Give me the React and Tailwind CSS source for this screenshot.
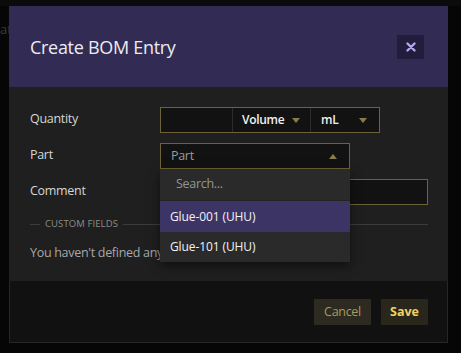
import React from 'react';

function Caret({ up = false, className = '' }) {
  return (
    <svg width="8" height="5" viewBox="0 0 8 5" className={className}>
      {up ? <path d="M0 5 L4 0 L8 5 Z" fill="currentColor" /> : <path d="M0 0 L8 0 L4 5 Z" fill="currentColor" />}
    </svg>
  );
}

export default function App() {
  const font = { fontFamily: '"Open Sans", "Noto Sans", sans-serif' };

  return (
    <div className="relative w-[461px] h-[353px] overflow-hidden bg-[#060606]" style={font}>
      {/* page behind the overlay */}
      <div className="absolute left-0 top-0 w-full h-[6px] bg-[#0b0b0b]" />
      <div className="absolute left-0 top-[20px] text-[13px] text-[#3a3a3a]">ate</div>

      <div className="relative ml-[9px] mt-[6px] w-[439px] h-[337px] flex flex-col border border-[#262626] bg-[#111111]">
        {/* header */}
        <div className="h-[81px] -mx-px -mt-px flex items-center justify-between pl-[21px] pr-[24px] pt-[2px] bg-[#322b54]">
          <h2 className="text-[18px] text-[#ecebf3] tracking-[-0.3px]">Create BOM Entry</h2>
          <button className="w-[27px] h-[24px] -mt-[2px] flex items-center justify-center bg-[#221d3c] text-[#b4a6ee]">
            <svg width="10" height="10" viewBox="0 0 10 10">
              <path d="M1.5 1.5 L8.5 8.5 M8.5 1.5 L1.5 8.5" stroke="currentColor" strokeWidth="2.4" strokeLinecap="round" />
            </svg>
          </button>
        </div>

        {/* body */}
        <div className="h-[194px] -mx-px bg-[#1f1f1f] pl-[21px] pr-[20px] pt-[20px] flex flex-col">
          <div className="flex items-center h-[26px]">
            <span className="w-[130px] -mt-[2px] text-[12.5px] tracking-[-0.3px] text-[#d6d6d6]">Quantity</span>
            <div className="flex h-[26px] w-[220px] border border-[#6d6238] bg-[#121212]">
              <div className="w-[72px] border-r border-[#2c2c2c]" />
              <div className="w-[78px] flex items-center justify-between pl-[9px] pr-[10px] border-r border-[#2c2c2c] text-[12px] tracking-[-0.3px] font-semibold text-[#f0f0f0]">
                <span>Volume</span>
                <Caret className="text-[#8a7c4a]" />
              </div>
              <div className="flex-1 flex items-center justify-between pl-[10px] pr-[12px] text-[12px] tracking-[-0.3px] font-semibold text-[#f0f0f0]">
                <span>mL</span>
                <Caret className="text-[#8a7c4a]" />
              </div>
            </div>
          </div>

          <div className="flex items-center h-[26px] mt-[10px]">
            <span className="w-[130px] -mt-[2px] text-[12.5px] tracking-[-0.3px] text-[#d6d6d6]">Part</span>
            <div className="relative w-[190px]">
              <div className="h-[26px] flex items-center justify-between pl-[10px] pr-[12px] border border-[#6d6238] bg-[#121212] text-[12.5px] tracking-[-0.3px] text-[#9a9a9a]">
                <span>Part</span>
                <Caret up className="text-[#8a7c4a]" />
              </div>
              <div className="absolute left-0 top-[26px] w-[190px] z-10 bg-[#2a2a2a] shadow-[0_4px_10px_rgba(0,0,0,0.5)]">
                <div className="h-[32px] flex items-center pl-[16px] text-[12.5px] tracking-[-0.3px] text-[#959595] border-b border-[#242424]">Search...</div>
                <div className="h-[31px] flex items-center pl-[10px] bg-[#3d3466] text-[12px] tracking-[-0.1px] text-[#f2f2f2]">Glue-001 (UHU)</div>
                <div className="h-[30px] flex items-center pl-[10px] text-[12px] tracking-[-0.1px] text-[#f2f2f2]">Glue-101 (UHU)</div>
              </div>
            </div>
          </div>

          <div className="flex items-center h-[26px] mt-[10px]">
            <span className="w-[130px] -mt-[2px] text-[12.5px] tracking-[-0.3px] text-[#d6d6d6]">Comment</span>
            <div className="flex-1 h-[26px] border border-[#6d6238] bg-[#121212]" />
          </div>

          <div className="flex items-center mt-[12px] gap-[5px]">
            <div className="w-[10px] h-px bg-[#3c3c3c]" />
            <span className="text-[9.5px] tracking-[0.1px] text-[#8c8c8c]">CUSTOM FIELDS</span>
            <div className="flex-1 h-px bg-[#3c3c3c]" />
          </div>

          <p className="mt-[13px] text-[12.5px] tracking-[-0.3px] text-[#a8a8a8]">You haven't defined any custom fields yet.</p>
        </div>

        {/* footer */}
        <div className="flex-1 flex items-center justify-end gap-[10px] pr-[19px] pt-px">
          <button className="h-[26px] w-[57px] bg-[#2d2a21] text-[12.5px] tracking-[-0.3px] text-[#a89a5c]">Cancel</button>
          <button className="h-[26px] w-[47px] bg-[#29261c] text-[12.5px] font-bold text-[#f0d262]">Save</button>
        </div>
      </div>
    </div>
  );
}
